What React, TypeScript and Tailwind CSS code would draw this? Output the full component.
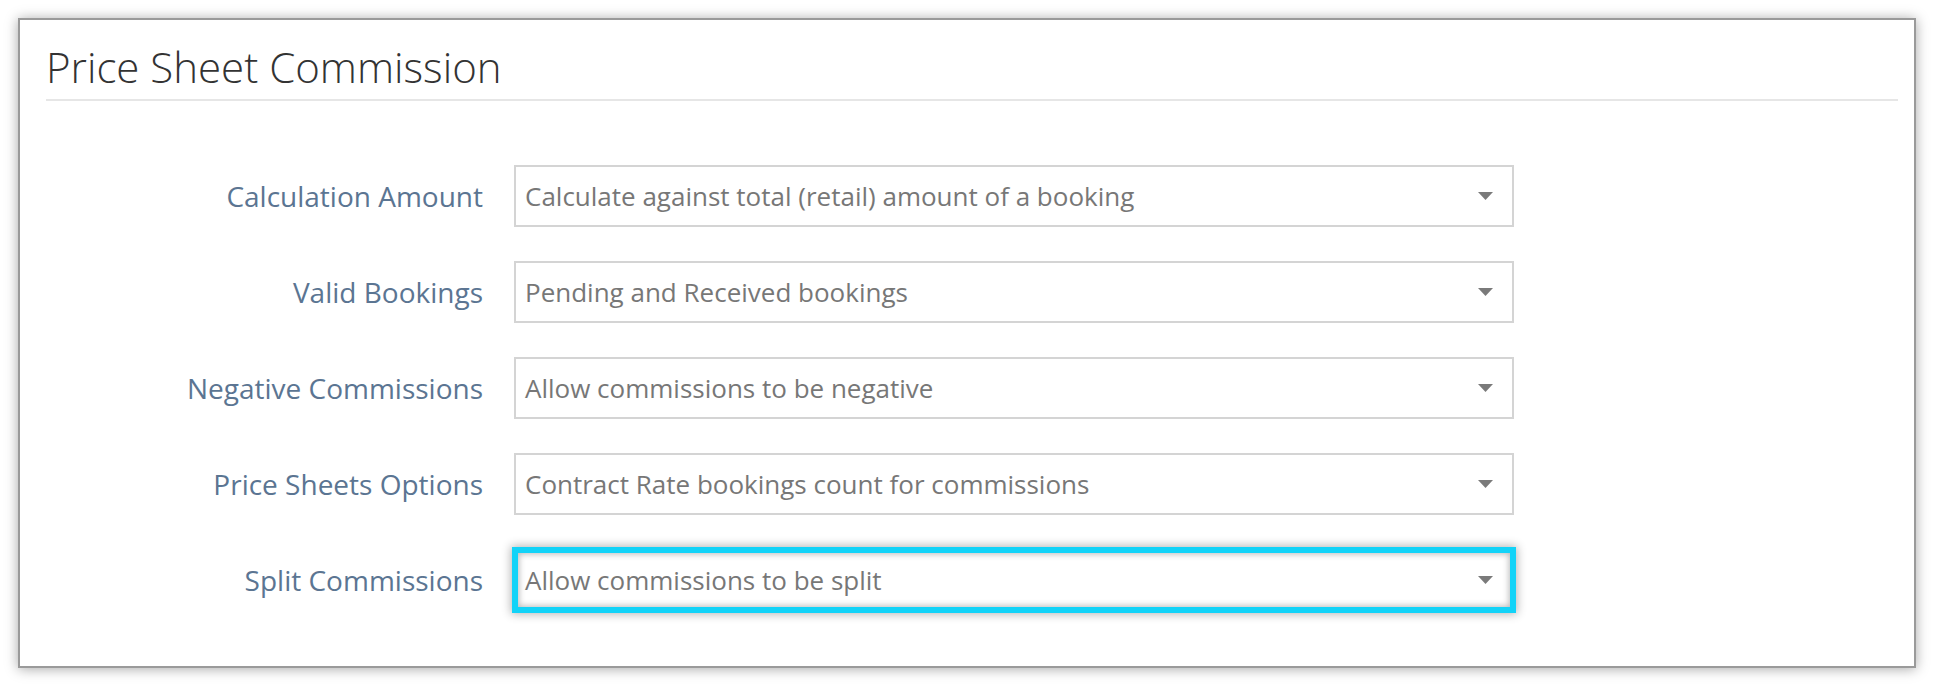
import React from "react";

const rows = [
  { label: "Calculation Amount", value: "Calculate against total (retail) amount of a booking" },
  { label: "Valid Bookings", value: "Pending and Received bookings" },
  { label: "Negative Commissions", value: "Allow commissions to be negative" },
  { label: "Price Sheets Options", value: "Contract Rate bookings count for commissions" },
  { label: "Split Commissions", value: "Allow commissions to be split", focused: true },
];

function Arrow() {
  return (
    <svg width="15" height="8" viewBox="0 0 15 8" className="shrink-0">
      <path d="M0 0 L15 0 L7.5 8 Z" fill="#7a7a7a" />
    </svg>
  );
}

export default function App() {
  return (
    <div className="bg-white w-[1934px] h-[686px] pt-[18px] pl-[18px]" style={{ fontFamily: '"Open Sans", "Noto Sans", sans-serif' }}>
      <div className="w-[1898px] h-[650px] bg-white border-2 border-[#9a9a9a] shadow-[0_1px_12px_rgba(0,0,0,0.35)]">
        <div className="ml-[26px] mr-[16px] mt-[18px] pb-[4px] border-b-2 border-[#e6e6e6]">
          <h1 className="text-[42px] leading-[57px] font-light text-[#333333]">Price Sheet Commission</h1>
        </div>
        <div className="mt-[64px] flex flex-col gap-[34px]">
          {rows.map((r) => (
            <div key={r.label} className="flex items-center">
              <div className="w-[463px] text-right text-[28px] text-[#5b7592]">{r.label}</div>
              <div
                className={
                  r.focused
                    ? "ml-[31px] w-[1000px] h-[62px] flex items-center justify-between pl-[9px] pr-[19px] border-2 border-[#12d3f8] shadow-[0_0_0_2px_#12d3f8,0_0_9px_3px_rgba(0,0,0,0.3),inset_0_0_0_2px_#12d3f8,inset_0_0_6px_3px_rgba(0,0,0,0.28)]"
                    : "ml-[31px] w-[1000px] h-[62px] flex items-center justify-between pl-[9px] pr-[19px] border-2 border-[#d4d4d4]"
                }
              >
                <span className="text-[26px] text-[#777777] whitespace-nowrap">{r.value}</span>
                <Arrow />
              </div>
            </div>
          ))}
        </div>
      </div>
    </div>
  );
}
